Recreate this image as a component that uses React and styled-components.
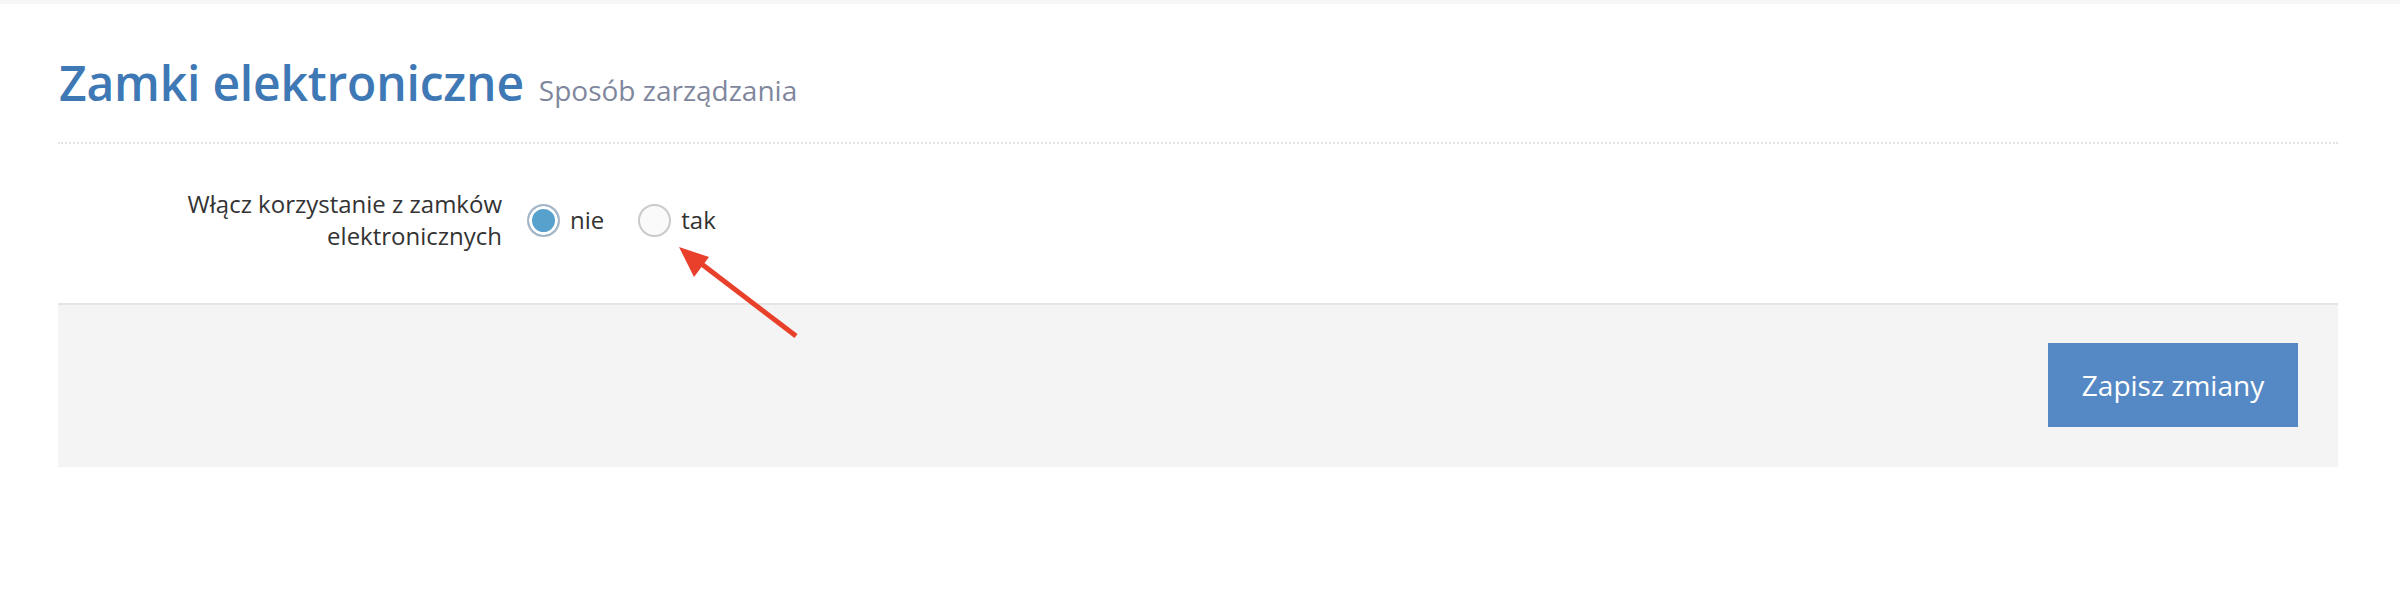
import React, { useState } from "react";
import styled, { createGlobalStyle } from "styled-components";

const GlobalStyle = createGlobalStyle`
  body {
    margin: 0;
    background: #fff;
    font-family: "Open Sans", "Noto Sans", sans-serif;
    color: #333;
  }
`;

const Page = styled.div`
  position: relative;
  min-height: 604px;
  border-top: 4px solid #f7f7f7;
  padding: 0 62px 0 58px;
`;

const Header = styled.div`
  display: flex;
  align-items: baseline;
  gap: 15px;
  padding: 55px 0 33px 1px;
  border-bottom: 2px dotted #e3e3e3;
`;

const Title = styled.h1`
  margin: 0;
  font-size: 48px;
  line-height: 48px;
  font-weight: 600;
  color: #3e78b5;
  letter-spacing: -0.2px;
`;

const Subtitle = styled.span`
  font-size: 28px;
  color: #7f879d;
`;

const FormRow = styled.div`
  display: flex;
  align-items: center;
  gap: 25px;
  margin: 44px 0 51px;
`;

const Label = styled.label`
  width: 444px;
  text-align: right;
  font-size: 24px;
  line-height: 32px;
  color: #333;
`;

const Options = styled.div`
  display: flex;
  align-items: center;
  gap: 34px;
`;

const Option = styled.label`
  display: flex;
  align-items: center;
  gap: 10px;
  font-size: 24px;
  line-height: 32px;
  color: #333;
  cursor: pointer;
`;

const RadioCircle = styled.span`
  box-sizing: border-box;
  width: 33px;
  height: 33px;
  border-radius: 50%;
  border: 2px solid ${(p) => (p.$checked ? "#a6b6c6" : "#cacaca")};
  background: ${(p) => (p.$checked ? "#57a2cc" : "#fafafa")};
  box-shadow: ${(p) => (p.$checked ? "inset 0 0 0 3px #fff" : "none")};
`;

const Footer = styled.div`
  display: flex;
  justify-content: flex-end;
  padding: 38px 40px 40px;
  background: #f4f4f4;
  border-top: 2px solid #e5e5e5;
`;

const SaveButton = styled.button`
  width: 250px;
  height: 84px;
  border: none;
  border-radius: 0;
  background: #5589c5;
  color: #fff;
  font-family: "Open Sans", "Noto Sans", sans-serif;
  font-size: 28px;
  cursor: pointer;
`;

const Arrow = styled.svg`
  position: absolute;
  left: 0;
  top: 0;
  pointer-events: none;
`;

const choices = [
  { value: "nie", label: "nie" },
  { value: "tak", label: "tak" },
];

export default function App() {
  const [value, setValue] = useState("nie");

  return (
    <>
      <GlobalStyle />
      <Page>
        <Header>
          <Title>Zamki elektroniczne</Title>
          <Subtitle>Sposób zarządzania</Subtitle>
        </Header>

        <FormRow>
          <Label>Włącz korzystanie z zamków elektronicznych</Label>
          <Options>
            {choices.map((c) => (
              <Option key={c.value} onClick={() => setValue(c.value)}>
                <RadioCircle $checked={value === c.value} />
                {c.label}
              </Option>
            ))}
          </Options>
        </FormRow>

        <Footer>
          <SaveButton>Zapisz zmiany</SaveButton>
        </Footer>

        {/* annotation arrow pointing at the "tak" option */}
        <Arrow width="820" height="360" viewBox="0 0 820 360">
          <line x1="796" y1="332" x2="699" y2="258" stroke="#e8402a" strokeWidth="5" />
          <polygon points="679,243 694,273 709,253" fill="#e8402a" />
        </Arrow>
      </Page>
    </>
  );
}
